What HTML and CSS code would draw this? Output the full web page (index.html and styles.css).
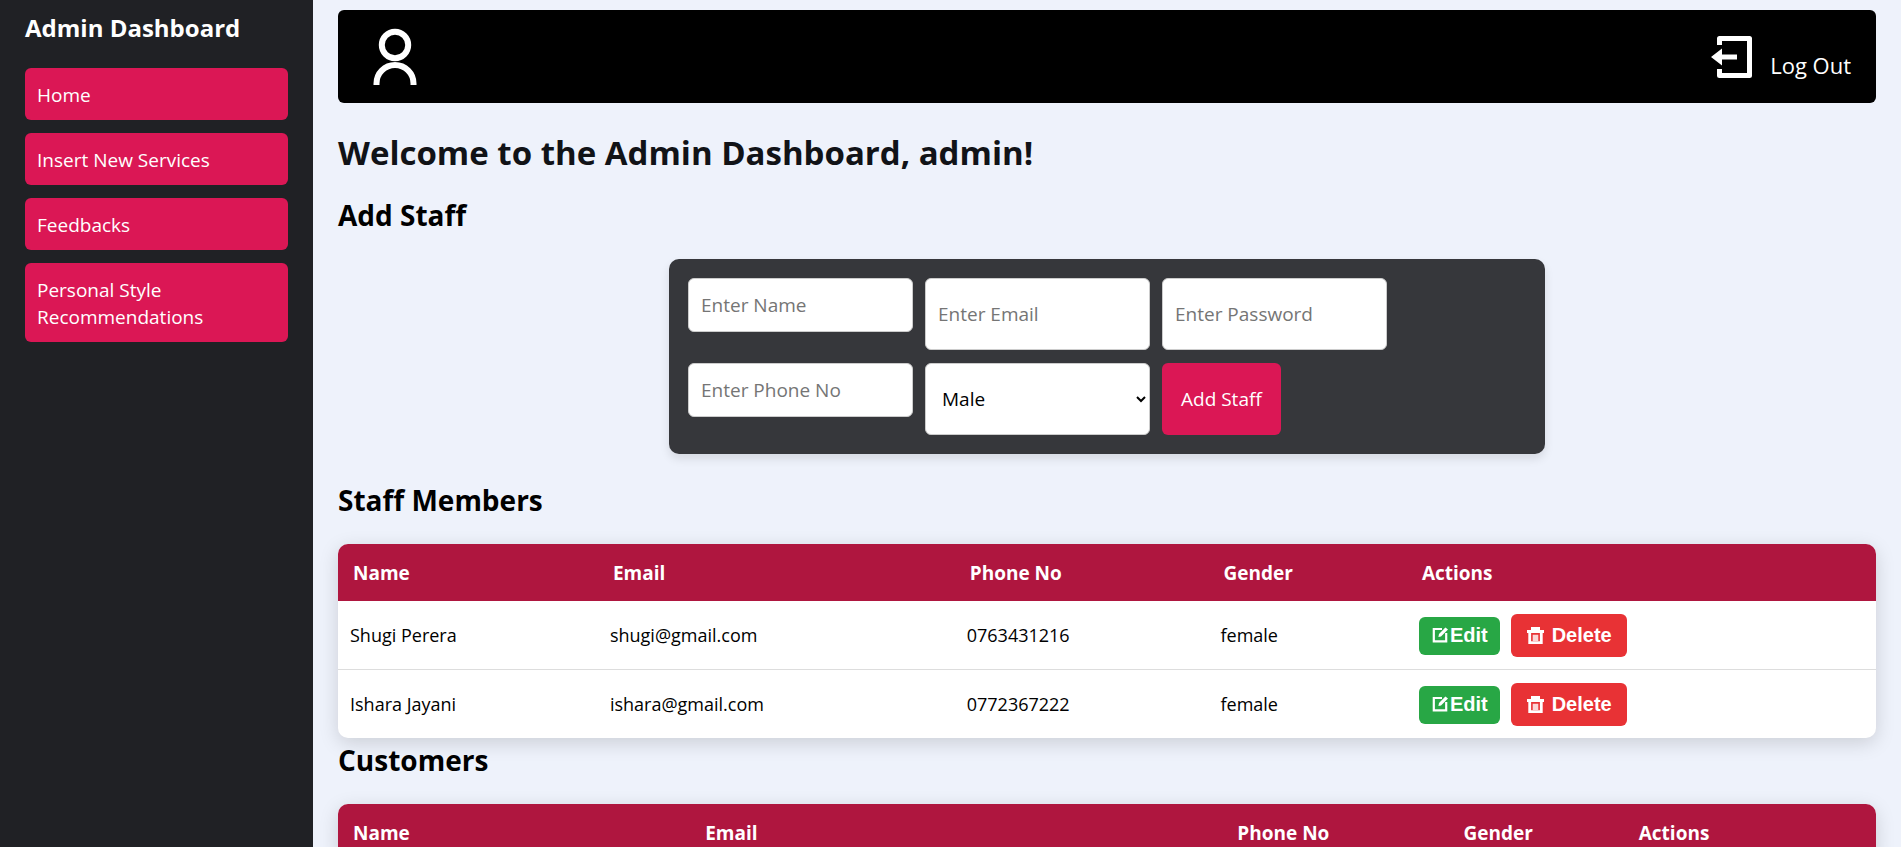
FILE: index.html
```html
<!DOCTYPE html>
<html lang="en">
<head>
  <meta charset="utf-8">
  <meta name="viewport" content="width=device-width, initial-scale=1">
  <title>Admin Dashboard</title>
  <link rel="stylesheet" href="styles.css">
</head>
<body>
  <svg class="sprite" aria-hidden="true">
    <symbol id="icon-edit" viewBox="0 0 16 16">
      <path d="M10 2H1.800v12.400h12.400V6" fill="none" stroke="currentColor" stroke-width="2.200"/>
      <path d="M13.400 .4 16 2.400 9 9.400 6.400 10 7 7z" fill="currentColor"/>
    </symbol>
    <symbol id="icon-trash" viewBox="0 0 17 18">
      <path d="M4 0h9v4H4z" fill="currentColor"/>
      <path d="M0 3h17v3H0z" fill="currentColor"/>
      <path d="M2.700 5v10.700h11.600V5" fill="none" stroke="currentColor" stroke-width="2.800"/>
      <path d="M5.700 7.700h5.600v6.300H5.700z" fill="currentColor" opacity=".8"/>
    </symbol>
  </svg>
  <div class="layout">
    <aside class="sidebar">
      <h2 class="sidebar-title">Admin Dashboard</h2>
      <nav class="sidebar-nav">
        <a class="nav-link" href="#home">Home</a>
        <a class="nav-link" href="#services">Insert New Services</a>
        <a class="nav-link" href="#feedbacks">Feedbacks</a>
        <a class="nav-link" href="#recommendations">Personal Style Recommendations</a>
      </nav>
    </aside>
    <main class="content">
      <header class="topbar">
        <a class="profile" href="#profile" aria-label="Profile">
          <svg width="44" height="58" viewBox="0 0 44 58" fill="none" stroke="#fff" stroke-width="6">
            <circle cx="22" cy="17" r="13.200"/>
            <path d="M3.500 57V55.500a18.500 18.500 0 0 1 37 0V57"/>
          </svg>
        </a>
        <a class="logout" href="#logout">
          <svg width="42" height="44" viewBox="0 0 42 44">
            <path d="M8.500 10V3.500h30v37h-30V34" fill="none" stroke="#fff" stroke-width="5" stroke-linejoin="round"/>
            <path d="M0 22 11 13.500v6h15v5H11v6z" fill="#fff"/>
          </svg>
          <span>Log Out</span>
        </a>
      </header>

      <h1 class="welcome">Welcome to the Admin Dashboard, admin!</h1>

      <h2 class="section-title">Add Staff</h2>
      <form class="staff-form">
        <input class="field field-short" type="text" placeholder="Enter Name" aria-label="Name">
        <input class="field" type="email" placeholder="Enter Email" aria-label="Email">
        <input class="field" type="password" placeholder="Enter Password" aria-label="Password">
        <input class="field field-short" type="text" placeholder="Enter Phone No" aria-label="Phone number">
        <select class="field" aria-label="Gender">
          <option>Male</option>
          <option>Female</option>
        </select>
        <button class="submit" type="submit">Add Staff</button>
      </form>

      <h2 class="section-title">Staff Members</h2>
      <table class="table">
        <colgroup>
          <col style="width:16.9%"><col style="width:23.2%"><col style="width:16.5%"><col style="width:12.9%"><col>
        </colgroup>
        <thead>
          <tr><th>Name</th><th>Email</th><th>Phone No</th><th>Gender</th><th>Actions</th></tr>
        </thead>
        <tbody>
          <tr>
            <td>Shugi Perera</td><td>shugi@gmail.com</td><td>0763431216</td><td>female</td>
            <td>
              <div class="actions">
                <button class="btn btn-edit" type="button"><svg width="16" height="16"><use href="#icon-edit"/></svg>Edit</button>
                <button class="btn btn-delete" type="button"><svg width="17" height="18"><use href="#icon-trash"/></svg>Delete</button>
              </div>
            </td>
          </tr>
          <tr>
            <td>Ishara Jayani</td><td>ishara@gmail.com</td><td>0772367222</td><td>female</td>
            <td>
              <div class="actions">
                <button class="btn btn-edit" type="button"><svg width="16" height="16"><use href="#icon-edit"/></svg>Edit</button>
                <button class="btn btn-delete" type="button"><svg width="17" height="18"><use href="#icon-trash"/></svg>Delete</button>
              </div>
            </td>
          </tr>
        </tbody>
      </table>

      <h2 class="section-title section-title-tight">Customers</h2>
      <table class="table">
        <colgroup>
          <col style="width:22.9%"><col style="width:34.6%"><col style="width:14.7%"><col style="width:11.4%"><col>
        </colgroup>
        <thead>
          <tr><th>Name</th><th>Email</th><th>Phone No</th><th>Gender</th><th>Actions</th></tr>
        </thead>
      </table>
    </main>
  </div>
</body>
</html>
```
FILE: styles.css
```css
* {
  box-sizing: border-box;
}

body {
  margin: 0;
  background: #eef2fb;
  color: #000;
  font-family: "Open Sans", "Noto Sans", sans-serif;
  font-size: 19px;
  line-height: 27px;
}

h1,
h2 {
  margin: 0;
}

.sprite {
  display: none;
}

.layout {
  display: flex;
  height: 100vh;
}

.sidebar {
  flex: 0 0 313px;
  padding: 10px 25px;
  background: #202125;
  color: #fff;
}

.sidebar-title {
  font-size: 24px;
  line-height: 36px;
  font-weight: 700;
}

.sidebar-nav {
  display: flex;
  flex-direction: column;
  gap: 13px;
  margin-top: 22px;
}

.nav-link {
  padding: 14px 12px 11px;
  border-radius: 6px;
  background: #db1755;
  color: #fff;
  text-decoration: none;
}

.content {
  flex: 1;
  min-width: 0;
  padding: 10px 25px 25px;
  overflow-y: auto;
  scrollbar-width: none;
}

.topbar {
  display: flex;
  align-items: flex-start;
  justify-content: space-between;
  padding: 18px 25px 17px 35px;
  border-radius: 6px;
  background: #000;
}

.profile svg,
.logout svg {
  display: block;
}

.logout {
  display: flex;
  align-items: flex-end;
  gap: 17px;
  padding-top: 7px;
  color: #fff;
  font-size: 22px;
  text-decoration: none;
}

.welcome {
  margin-top: 27px;
  color: #111317;
  font-size: 33px;
  line-height: 46px;
  font-weight: 700;
}

.section-title {
  margin-top: 19px;
  font-size: 28px;
  line-height: 40px;
  font-weight: 700;
}

.staff-form {
  display: flex;
  flex-wrap: wrap;
  gap: 13px 12px;
  max-width: 876px;
  margin: 24px auto 26px;
  padding: 19px;
  border-radius: 10px;
  background: #36373b;
  box-shadow: 0 5px 10px rgba(0, 0, 0, 0.1);
}

.field {
  width: 225px;
  height: 72px;
  padding: 12px;
  border: 1px solid #ccc;
  border-radius: 6px;
  background: #fff;
  color: #000;
  font: inherit;
}

.field::placeholder {
  color: #757575;
}

.field-short {
  height: 54px;
}

.submit {
  height: 72px;
  padding: 12px 19px;
  border: 0;
  border-radius: 6px;
  background: #db1755;
  color: #fff;
  font: inherit;
}

.table {
  width: 100%;
  margin-top: 24px;
  border-spacing: 0;
  border-radius: 10px;
  overflow: hidden;
  background: #fff;
  box-shadow: 0 5px 19px rgba(0, 0, 0, 0.15);
  table-layout: fixed;
  text-align: left;
}

.table th {
  padding: 16px 15px 14px;
  background: #af163f;
  color: #fff;
  font-weight: 700;
}

.table td {
  padding: 13px 12px 12px;
  border-bottom: 1px solid #ddd;
  font-size: 18px;
}

.table tr:last-child td {
  border-bottom: 0;
}

.section-title-tight {
  margin-top: 2px;
}

.actions {
  display: flex;
  align-items: center;
  gap: 11px;
}

.btn {
  display: inline-flex;
  align-items: center;
  border: 0;
  border-radius: 6px;
  color: #fff;
  font: bold 20px/23px "Liberation Sans", Arial, sans-serif;
}

.btn-edit {
  gap: 2px;
  padding: 7px 12px 8px 13px;
  background: #28a745;
}

.btn-delete {
  gap: 8px;
  padding: 10px 15px 10px 16px;
  background: #e83235;
}
```
